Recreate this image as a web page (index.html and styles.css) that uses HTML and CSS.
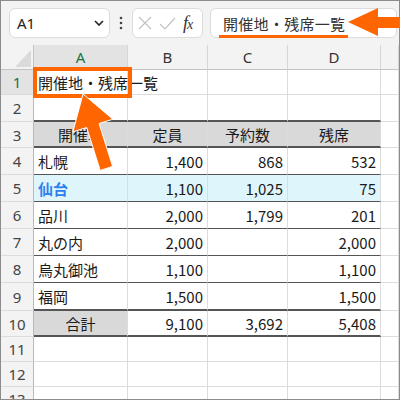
FILE: index.html
```html
<!DOCTYPE html>
<html lang="ja">
<head>
<meta charset="utf-8">
<title>開催地・残席一覧</title>
<link rel="stylesheet" href="styles.css">
</head>
<body>
<div class="app">
  <div class="toolbar">
    <div class="namebox">
      <span class="ref">A1</span>
      <svg class="chev" width="10" height="6" viewBox="0 0 10 6"><path d="M1 1 L5 5 L9 1" fill="none" stroke="#222" stroke-width="1.6"/></svg>
    </div>
    <div class="dots">
      <svg width="4" height="14" viewBox="0 0 4 14"><circle cx="2" cy="2" r="1.3" fill="#444"/><circle cx="2" cy="7" r="1.3" fill="#444"/><circle cx="2" cy="12" r="1.3" fill="#444"/></svg>
    </div>
    <div class="fxbox">
      <svg width="14" height="14" viewBox="0 0 14 14"><path d="M1 1 L13 13 M13 1 L1 13" stroke="#c2c2c2" stroke-width="1.2" fill="none"/></svg>
      <svg width="17" height="13" viewBox="0 0 17 13"><path d="M1 7 L6 12 L16 1" stroke="#c2c2c2" stroke-width="1.2" fill="none"/></svg>
      <span class="fx">f<span class="fxx">x</span></span>
    </div>
    <div class="formula"><span class="ftext">開催地・残席一覧</span></div>
  </div>

  <div class="sheet">
    <!-- column header row -->
    <div class="c corner"><span class="tri"></span></div>
    <div class="c ch sel">A</div>
    <div class="c ch">B</div>
    <div class="c ch">C</div>
    <div class="c ch">D</div>
    <div class="c ch"></div>

    <!-- 1 -->
    <div class="c rh selr">1</div>
    <div class="c">開催地・残席一覧</div>
    <div class="c"></div><div class="c"></div><div class="c"></div><div class="c"></div>

    <!-- 2 -->
    <div class="c rh">2</div>
    <div class="c b2"></div><div class="c b2"></div><div class="c b2"></div><div class="c b2"></div><div class="c"></div>

    <!-- 3 -->
    <div class="c rh">3</div>
    <div class="c th ctr b2">開催地</div>
    <div class="c th ctr b2">定員</div>
    <div class="c th ctr b2">予約数</div>
    <div class="c th ctr b2">残席</div>
    <div class="c"></div>

    <!-- 4 -->
    <div class="c rh">4</div>
    <div class="c b1">札幌</div>
    <div class="c num b1">1,400</div>
    <div class="c num b1">868</div>
    <div class="c num b1">532</div>
    <div class="c"></div>

    <!-- 5 -->
    <div class="c rh">5</div>
    <div class="c hi b1 blue">仙台</div>
    <div class="c hi num b1">1,100</div>
    <div class="c hi num b1">1,025</div>
    <div class="c hi num b1">75</div>
    <div class="c"></div>

    <!-- 6 -->
    <div class="c rh">6</div>
    <div class="c b1">品川</div>
    <div class="c num b1">2,000</div>
    <div class="c num b1">1,799</div>
    <div class="c num b1">201</div>
    <div class="c"></div>

    <!-- 7 -->
    <div class="c rh">7</div>
    <div class="c b1">丸の内</div>
    <div class="c num b1">2,000</div>
    <div class="c num b1"></div>
    <div class="c num b1">2,000</div>
    <div class="c"></div>

    <!-- 8 -->
    <div class="c rh">8</div>
    <div class="c b1">烏丸御池</div>
    <div class="c num b1">1,100</div>
    <div class="c num b1"></div>
    <div class="c num b1">1,100</div>
    <div class="c"></div>

    <!-- 9 -->
    <div class="c rh">9</div>
    <div class="c b2">福岡</div>
    <div class="c num b2">1,500</div>
    <div class="c num b2"></div>
    <div class="c num b2">1,500</div>
    <div class="c"></div>

    <!-- 10 -->
    <div class="c rh">10</div>
    <div class="c th ctr b2">合計</div>
    <div class="c num b2">9,100</div>
    <div class="c num b2">3,692</div>
    <div class="c num b2">5,408</div>
    <div class="c"></div>

    <!-- 11 -->
    <div class="c rh">11</div>
    <div class="c"></div><div class="c"></div><div class="c"></div><div class="c"></div><div class="c"></div>
    <!-- 12 -->
    <div class="c rh">12</div>
    <div class="c"></div><div class="c"></div><div class="c"></div><div class="c"></div><div class="c"></div>
    <!-- 13 -->
    <div class="c rh">13</div>
    <div class="c"></div><div class="c"></div><div class="c"></div><div class="c"></div><div class="c"></div>
  </div>

  <div class="hlbox"></div>
  <div class="uline"></div>
  <svg class="arrows" width="400" height="400" viewBox="0 0 400 400">
    <polygon points="348,22 378,8 378,17 400,17 400,28 378,28 378,36" fill="#ff6600"/>
    <polygon points="83,94 112.9,119.2 99.1,123.5 112.6,166.4 100.2,170.4 86.7,127.5 72.9,131.8" fill="#ff6600" stroke="#ffffff" stroke-width="1" stroke-linejoin="miter"/>
  </svg>
</div>
</body>
</html>
```

FILE: styles.css
```css
html, body {
  margin: 0;
  padding: 0;
  background: #ffffff;
}

.app {
  position: relative;
  width: 400px;
  height: 400px;
  box-sizing: border-box;
  border: 1px solid #8c8c8c;
  overflow: hidden;
  background: #ffffff;
  font-family: "Noto Sans CJK JP", sans-serif;
  color: #1a1a1a;
}

/* ---------- toolbar ---------- */
.toolbar {
  height: 44px;
  box-sizing: border-box;
  background: #f3f3f3;
  display: flex;
  align-items: center;
  padding-left: 8px;
  padding-right: 2px;
}

.namebox {
  width: 101px;
  height: 30px;
  box-sizing: border-box;
  background: #ffffff;
  border: 1px solid #dcdcdc;
  border-radius: 6px;
  display: flex;
  align-items: center;
  justify-content: space-between;
  padding: 0 5px 0 7px;
}

.ref {
  font-family: "Noto Sans", sans-serif;
  font-size: 15px;
  color: #222;
}

.chev {
  display: block;
}

.dots {
  width: 22px;
  display: flex;
  justify-content: center;
  align-items: center;
}

.dots svg {
  display: block;
}

.fxbox {
  width: 71px;
  height: 30px;
  box-sizing: border-box;
  background: #ffffff;
  border: 1px solid #dcdcdc;
  border-radius: 6px;
  display: flex;
  align-items: center;
  gap: 7px;
  padding-left: 5px;
  margin-right: 7px;
}

.fxbox svg {
  display: block;
}

.fx {
  font-family: "Liberation Serif", serif;
  font-style: italic;
  font-size: 18px;
  color: #333;
  line-height: 1;
  letter-spacing: -1px;
}

.fxx {
  font-size: 14px;
}

.formula {
  flex: 1;
  height: 30px;
  box-sizing: border-box;
  background: #ffffff;
  border: 1px solid #dcdcdc;
  border-radius: 6px;
  display: flex;
  align-items: center;
  padding-left: 12px;
}

.ftext {
  font-size: 15px;
  color: #333;
  letter-spacing: 0.3px;
}

/* ---------- sheet ---------- */
.sheet {
  display: grid;
  grid-template-columns: 33px 94px 80px 80px 93px 1fr;
  grid-template-rows: 25px 25px 27px 26px 27px 27px 27px 27px 27px 28px 26px 25px 25px 25px;
}

.c {
  box-sizing: border-box;
  border-right: 1px solid #dcdcdc;
  border-bottom: 1px solid #dcdcdc;
  display: flex;
  align-items: center;
  padding: 0 4px;
  font-size: 15px;
  white-space: nowrap;
  min-width: 0;
}

.corner {
  background: #f3f3f3;
  border-right: 1px solid #c4c4c4;
  border-bottom: 1px solid #c4c4c4;
  position: relative;
}

.tri {
  position: absolute;
  right: 2px;
  bottom: 2px;
  width: 0;
  height: 0;
  border-left: 16px solid transparent;
  border-bottom: 17px solid #dadada;
}

.ch {
  background: #f3f3f3;
  justify-content: center;
  font-family: "Noto Sans", sans-serif;
  color: #333;
  border-right: 1px solid #d6d6d6;
  border-bottom: 1px solid #c4c4c4;
}

.ch.sel {
  background: #e3e3e3;
  color: #1e7145;
}

.rh {
  background: #f3f3f3;
  justify-content: center;
  font-family: "Noto Sans", sans-serif;
  color: #444;
  border-right: 1px solid #b9b9b9;
  padding: 0;
}

.rh.selr {
  background: #e3e3e3;
  color: #1e7145;
}

.num {
  justify-content: flex-end;
}

.ctr {
  justify-content: center;
}

.th {
  background: #d9d9d9;
}

.hi {
  background: #dff5fc;
}

.blue {
  color: #2f80ed;
  font-weight: bold;
}

.b1 {
  border-bottom: 1px solid #555555;
}

.b2 {
  border-bottom: 2px solid #555555;
}

/* ---------- annotations ---------- */
.hlbox {
  position: absolute;
  left: 32px;
  top: 66px;
  width: 99px;
  height: 31px;
  box-sizing: border-box;
  border: 4px solid #ff6600;
}

.uline {
  position: absolute;
  left: 218px;
  top: 34px;
  width: 129px;
  height: 3px;
  background: #ff6600;
}

.arrows {
  position: absolute;
  left: -1px;
  top: -1px;
  pointer-events: none;
}
```
